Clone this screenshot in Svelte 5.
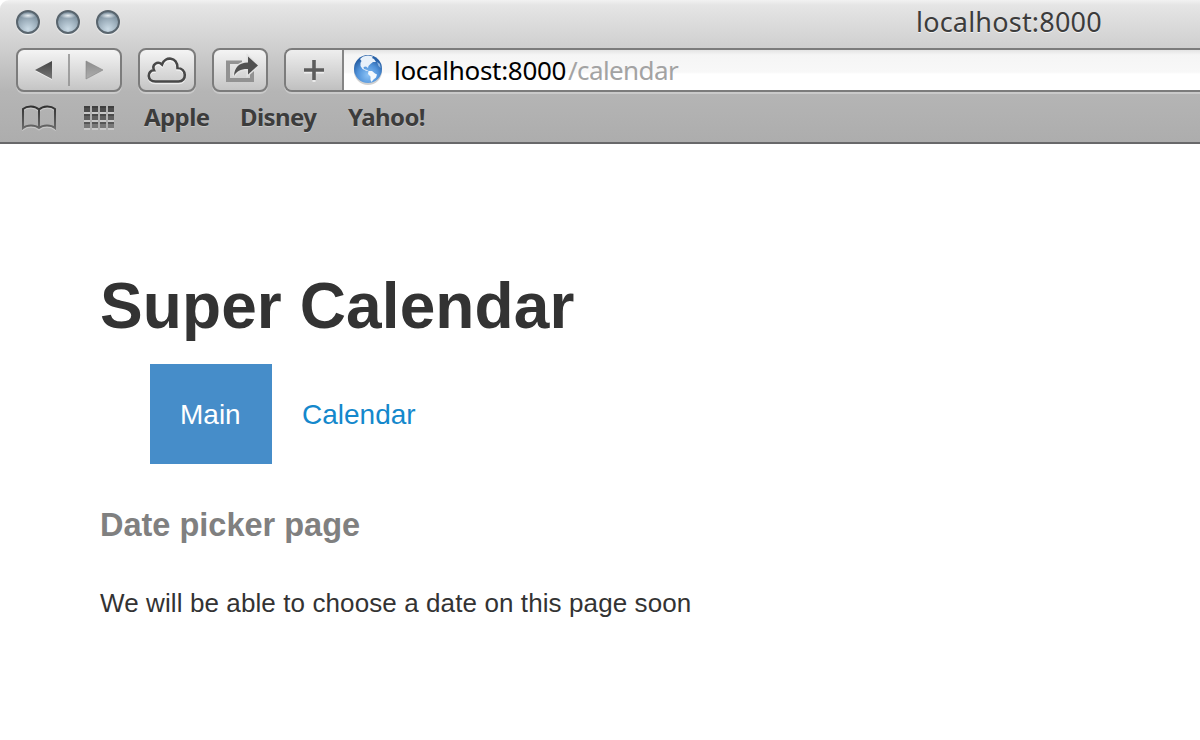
<script>
  const lights = ['close', 'minimise', 'zoom'];
  const bookmarks = ['Apple', 'Disney', 'Yahoo!'];
  const cols = [0, 8, 16, 24];
  const rows = [0, 8, 16];
  const cloud = 'M15.500 31.500C6.500 31.500 7 20.500 14 20.300C11.500 14.500 17.500 10.500 22 14.500C25 6 37.500 6.500 37.500 18C46.500 18 47.500 31.500 38.500 31.500Z';
  const book = 'M18 4.500C14 .5 6 .5 2 4V23C6 19.500 14 19.500 18 23C22 19.500 30 19.500 34 23V4C30 .5 22 .5 18 4.500ZM18 4.500V23';
</script>

<div class="window">
  <header>
    <div class="titlebar">
      <div class="lights">
        {#each lights as light (light)}<i></i>{/each}
      </div>
      <span class="title">localhost:8000</span>
    </div>

    <div class="toolbar">
      <div class="btn nav">
        <svg width="102" height="40" viewBox="0 0 102 40">
          <defs>
            <linearGradient id="dk" x1="0" y1="0" x2="0" y2="1"><stop offset="0" stop-color="#444" /><stop offset="1" stop-color="#777" /></linearGradient>
            <linearGradient id="lt" x1="0" y1="0" x2="0" y2="1"><stop offset="0" stop-color="#8d8d8d" /><stop offset="1" stop-color="#adadad" /></linearGradient>
          </defs>
          <path d="M34 12V30L17 21Z" fill="#fff" opacity=".6" />
          <path d="M34 11V29L17 20Z" fill="url(#dk)" />
          <path d="M51 4V36" stroke="#909090" stroke-width="1.600" />
          <path d="M68 11V29L85 20Z" fill="url(#lt)" stroke="#858585" stroke-width=".6" />
        </svg>
      </div>
      <div class="btn cloud">
        <svg width="54" height="40" viewBox="0 0 54 40">
          <path d={cloud} fill="none" stroke="#fff" stroke-opacity=".6" stroke-width="2.600" transform="translate(0 1.500)" />
          <path d={cloud} fill="none" stroke="#484848" stroke-width="2.600" />
        </svg>
      </div>
      <div class="btn share">
        <svg width="52" height="40" viewBox="0 0 52 40">
          <path d="M12 10.500H28V14H16V28H36V20H40V32H12Z" fill="#929292" />
          <path d="M20 26C20.500 17 25 13 34 12.500V6.500L44 15.500L34 24.500V19C27 18.800 22.500 21 20 26Z" fill="#e2e2e2" stroke="#e2e2e2" stroke-width="3" />
          <path d="M20 26C20.500 17 25 13 34 12.500V6.500L44 15.500L34 24.500V19C27 18.800 22.500 21 20 26Z" fill="#505050" />
        </svg>
      </div>
      <div class="address">
        <div class="plus">
          <svg width="57" height="40" viewBox="0 0 57 40">
            <path d="M28 12V32M18 22H38" stroke="#fff" stroke-opacity=".6" stroke-width="3" />
            <path d="M28 10V30M18 20H38" stroke="#5c5c5c" stroke-width="3.600" />
          </svg>
        </div>
        <div class="field">
          <svg class="globe" width="30" height="32" viewBox="0 0 30 32">
            <defs>
              <radialGradient id="sea" cx=".5" cy=".72" r=".62"><stop offset="0" stop-color="#8bc2f5" /><stop offset=".6" stop-color="#5193da" /><stop offset="1" stop-color="#2861a7" /></radialGradient>
            </defs>
            <ellipse cx="15" cy="17" rx="14" ry="14" fill="#777" opacity=".35" />
            <circle cx="15" cy="15" r="14" fill="url(#sea)" />
            <path d="M7 5L10 2.500L15 1.600L20 2.500L19 4L21 5L23 8L20 8L17.500 10L15.500 12L15 14L13 12.500L10.500 13L11 15L14 16L15.500 17L13 16.800L9.500 15L7.500 12L7.500 9L8.500 7Z" fill="#e8f1fa" />
            <path d="M15.500 17L19 17L22 19.500L24 20.500L23 23.500L20.500 25.500L18.500 28L17.500 26L17.500 22.500L15 20Z" fill="#f4f9fd" />
            <path d="M24 8L27 10L27.600 14L25.500 12Z" fill="#b7d3ef" opacity=".7" />
          </svg>
          <span class="host">localhost:8000</span><span class="path">/calendar</span>
        </div>
      </div>
    </div>

    <div class="bookmarks">
      <svg class="book" width="36" height="26" viewBox="0 0 36 26">
        <defs><linearGradient id="bk" x1="0" y1="0" x2="0" y2="26" gradientUnits="userSpaceOnUse"><stop offset="0" stop-color="#2e2e2e" /><stop offset="1" stop-color="#707070" /></linearGradient></defs>
        <path d={book} fill="none" stroke="#c8c8c8" stroke-width="1.800" transform="translate(0 1.500)" />
        <path d={book} fill="none" stroke="url(#bk)" stroke-width="2" />
      </svg>
      <svg class="grid" width="32" height="26" viewBox="0 0 32 26">
        {#each rows as y (y)}
          {#each cols as x (x)}
            <rect {x} y={y + 2} width="6" height="6" fill="#c8c8c8" />
            <rect {x} {y} width="6" height="6" fill={y === 0 ? '#4c4c4c' : y === 8 ? '#606060' : '#787878'} />
            <rect {x} {y} width="6" height="2" fill="#333" opacity=".5" />
          {/each}
        {/each}
      </svg>
      {#each bookmarks as name (name)}<span class={name[0]}>{name}</span>{/each}
    </div>
  </header>

  <main>
    <h1>Super Calendar</h1>
    <nav><a class="active" href="#main">Main</a><a href="#calendar">Calendar</a></nav>
    <h3>Date picker page</h3>
    <p>We will be able to choose a date on this page soon</p>
  </main>
</div>

<style>
  :global(body) { margin: 0; background: #fff; }
  .window { width: 1200px; height: 740px; overflow: hidden; background: #fff; }
  header {
    box-sizing: border-box; height: 144px; border-bottom: 2px solid #68686a; border-radius: 9px 0 0 0;
    background: linear-gradient(#f2f2f2 0, #e5e5e5 5px, #d0d0d0 46px, #b5b5b5 92px, #adadad 142px);
    font-family: "Noto Sans", sans-serif; color: #3c3c3c;
    display: flex; flex-direction: column;
  }
  .titlebar { height: 48px; display: flex; }
  .lights { display: flex; gap: 16px; padding: 10px 0 0 16px; }
  .lights i {
    box-sizing: border-box; width: 24px; height: 24px; border-radius: 50%; border: 2px solid #59656e;
    background: radial-gradient(ellipse 8px 3px at 50% 18%, #e8eef2, transparent), radial-gradient(circle at 50% 85%, #cbdbe6 0, #9fb1be 45%, #798c9a 80%);
    box-shadow: 0 1px 1px #f4f4f4;
  }
  .title { margin-left: 796px; line-height: 43px; font-size: 27px; letter-spacing: .2px; white-space: nowrap; text-shadow: 0 1px 0 #f2f2f2; }
  .toolbar { height: 44px; display: flex; padding-left: 16px; }
  .btn, .address { box-sizing: border-box; height: 44px; border: 2px solid #7c7c7c; box-shadow: 0 2px 0 #cacaca; }
  .btn { border-radius: 8px; background: linear-gradient(#f4f4f4, #c5c5c5); }
  svg { display: block; flex: none; }
  .nav { width: 106px; }
  .cloud { width: 58px; margin-left: 16px; }
  .share { width: 56px; margin-left: 16px; }
  .address { flex: 1; margin-left: 16px; border-right: 0; border-radius: 8px 0 0 8px; display: flex; overflow: hidden; }
  .plus { width: 56px; border-right: 2px solid #858585; background: linear-gradient(#eee, #c0c0c0); }
  .field { flex: 1; display: flex; background: linear-gradient(#e4e4e4 0, #f5f5f5 5px, #f8f8f8 22px, #fff 24px); font-size: 26px; line-height: 41px; white-space: nowrap; }
  .globe { margin: 4px 0 0 9px; }
  .host { color: #000; margin-left: 11px; width: 174px; letter-spacing: -.3px; }
  .path { color: #a3a3a3; letter-spacing: -.6px; }
  .bookmarks { height: 50px; display: flex; font-size: 24px; font-weight: 700; letter-spacing: -.6px; line-height: 50px; text-shadow: 0 1px 0 #c8c8c8; }
  .book { margin: 13px 0 0 21px; }
  .grid { margin: 14px 28px 0 27px; }
  .bookmarks span { width: 96px; flex: none; white-space: nowrap; }
  .bookmarks .D { width: 108px; }
  main { font-family: "Liberation Sans", Arial, sans-serif; color: #333; padding: 122px 100px 0; }
  h1 { margin: 0; font-size: 64px; line-height: 80px; letter-spacing: .1px; }
  nav { display: flex; height: 100px; margin: 18px 0 0 50px; font-size: 28px; line-height: 101px; }
  a { padding: 0 30px; color: #1488cc; text-decoration: none; }
  .active { box-sizing: border-box; width: 122px; background: #468dc9; color: #fff; }
  h3 { margin: 41px 0 0; font-size: 32.5px; line-height: 40px; color: #808080; }
  p { margin: 38px 0 0; font-size: 26px; line-height: 40px; letter-spacing: .1px; }
</style>
